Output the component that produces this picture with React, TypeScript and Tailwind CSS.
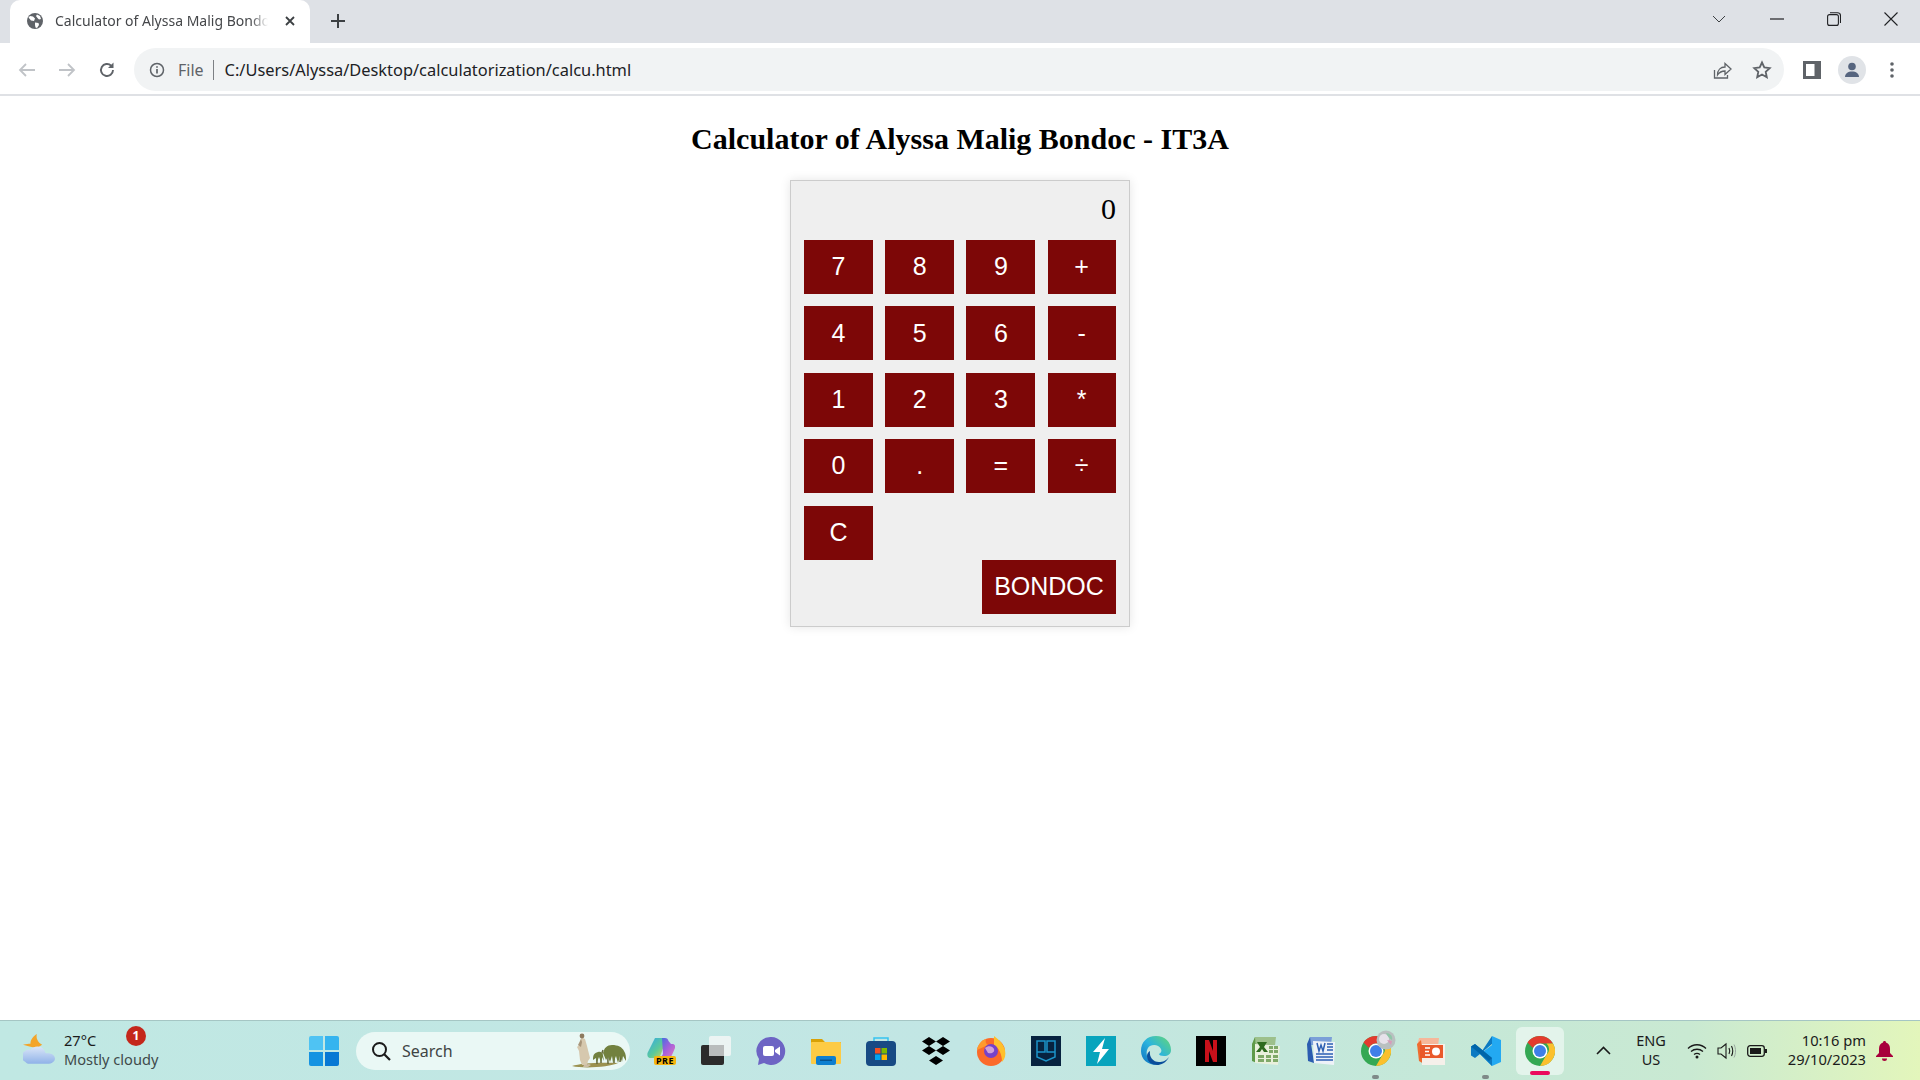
import React from "react";

const ui = { fontFamily: '"Noto Sans", "Open Sans", sans-serif' };

function Globe() {
  return (
    <svg width="18" height="18" viewBox="0 0 18 18">
      <circle cx="9" cy="9" r="8" fill="#5f6368" />
      <path d="M4 4l3 .5 2 2-1 2.500-3-.5-2.500-3zM11 2.500l3 1.500 1 3-2 .5-1.500-1.500-1.500-2zM9 10.500l3.500.5.5 2-2 3-1.500-.5-.5-2.500z" fill="#fff" />
    </svg>
  );
}

function Tabs() {
  return (
    <div className="flex h-[43px] items-end bg-[#dee1e6]">
      <div className="ml-[10px] flex h-[43px] w-[300px] items-center rounded-t-[10px] bg-white pb-[2px] pl-[16px] pr-[12px]">
        <Globe />
        <div className="ml-[11px] h-[20px] w-[213px] overflow-hidden whitespace-nowrap text-[14px] leading-[20px] text-[#45474a]" style={{ ...ui, maskImage: "linear-gradient(90deg,#000 92%,transparent)" }}>
          Calculator of Alyssa Malig Bondoc - IT3A
        </div>
        <svg className="ml-[16px]" width="12" height="12" viewBox="0 0 12 12"><path d="M2 2l8 8M10 2l-8 8" stroke="#3c4043" strokeWidth="1.800" /></svg>
      </div>
      <div className="flex h-[43px] w-[44px] items-center justify-center pb-[2px] pl-[11px]">
        <svg width="16" height="16" viewBox="0 0 16 16"><path d="M8 1v14M1 8h14" stroke="#3c4043" strokeWidth="2" /></svg>
      </div>
      <div className="flex-1" />
      <div className="flex h-[37px] items-center self-start">
        <svg width="14" height="8" viewBox="0 0 14 8"><path d="M1 1l6 6 6-6" fill="none" stroke="#3c4043" strokeWidth="1" /></svg>
        <svg className="ml-[44px]" width="14" height="2" viewBox="0 0 14 2"><path d="M0 1h14" stroke="#202124" strokeWidth="1.200" /></svg>
        <svg className="ml-[43px]" width="14" height="14" viewBox="0 0 14 14"><rect x=".6" y="2.600" width="10.800" height="10.800" rx="2" fill="none" stroke="#202124" strokeWidth="1.100" /><path d="M3 .7h7.500a3 3 0 0 1 3 3V11" fill="none" stroke="#202124" strokeWidth="1.100" /></svg>
        <svg className="ml-[43px] mr-[22px]" width="14" height="14" viewBox="0 0 14 14"><path d="M.5.5l13 13M13.500.5l-13 13" stroke="#202124" strokeWidth="1.100" /></svg>
      </div>
    </div>
  );
}

function Toolbar() {
  return (
    <div className="flex h-[53px] items-center border-b-2 border-[#dfe1e5] bg-white pt-[2px]">
      <svg className="ml-[18px]" width="18" height="16" viewBox="0 0 18 16"><path d="M17 8H2M8 2L2 8l6 6" fill="none" stroke="#c0c3c7" strokeWidth="1.800" /></svg>
      <svg className="ml-[22px]" width="18" height="16" viewBox="0 0 18 16"><path d="M1 8h15M10 2l6 6-6 6" fill="none" stroke="#c0c3c7" strokeWidth="1.800" /></svg>
      <svg className="ml-[22px]" width="18" height="18" viewBox="0 0 18 18"><path d="M15 9a6 6 0 1 1-1.800-4.300" fill="none" stroke="#5f6368" strokeWidth="1.900" /><path d="M15.500 1.500v5.500h-5.500z" fill="#5f6368" /></svg>
      <div className="ml-[18px] flex h-[43px] w-[1650px] items-center rounded-full bg-[#f1f3f4] pl-[15px]">
        <svg width="16" height="16" viewBox="0 0 16 16"><circle cx="8" cy="8" r="6.500" fill="none" stroke="#5f6368" strokeWidth="1.500" /><path d="M8 7v4.500M8 4.200v1.600" stroke="#5f6368" strokeWidth="1.700" /></svg>
        <span className="ml-[13px] text-[16px] leading-[22px] text-[#5f6368]" style={ui}>File</span>
        <div className="ml-[9px] h-[20px] w-px bg-[#7d8084]" />
        <span className="ml-[11px] text-[16.400px] leading-[22px] text-[#202124]" style={ui}>C:/Users/Alyssa/Desktop/calculatorization/calcu.html</span>
        <div className="flex-1" />
        <svg width="20" height="20" viewBox="0 0 20 20"><path d="M2.500 10v8h13v-3" fill="none" stroke="#5f6368" strokeWidth="1.300" /><path d="M5.500 15c0-5 3-8 7.500-8V3.500l6 5.500-6 5.500V11c-3 0-5.500 1-7.500 4z" fill="none" stroke="#5f6368" strokeWidth="1.300" /></svg>
        <svg className="ml-[20px] mr-[12px]" width="20" height="20" viewBox="0 0 20 20"><path d="M10 2.500l2.300 5 5.400.6-4 3.700 1.100 5.400L10 14.500l-4.800 2.700 1.100-5.400-4-3.700 5.400-.6z" fill="none" stroke="#5f6368" strokeWidth="1.800" /></svg>
      </div>
      <svg className="ml-[19px]" width="18" height="18" viewBox="0 0 18 18"><rect width="18" height="18" fill="#5f6368" /><rect x="3" y="3" width="8.500" height="12" fill="#fff" /></svg>
      <div className="ml-[17px] flex h-[28px] w-[28px] items-center justify-center rounded-full bg-[#e0e3e7]">
        <svg width="18" height="18" viewBox="0 0 18 18"><circle cx="9" cy="5.500" r="3.800" fill="#56657f" /><path d="M2 16c0-3.500 3-5.500 7-5.500s7 2 7 5.500z" fill="#56657f" /></svg>
      </div>
      <svg className="ml-[24px]" width="4" height="16" viewBox="0 0 4 16"><circle cx="2" cy="2" r="1.800" fill="#5f6368" /><circle cx="2" cy="8" r="1.800" fill="#5f6368" /><circle cx="2" cy="14" r="1.800" fill="#5f6368" /></svg>
    </div>
  );
}

function Key({ label, wide }: { label: string; wide?: boolean }) {
  return (
    <button className={`flex h-[54px] items-center justify-center bg-[#7d0707] text-[25px] text-white ${wide ? "w-[134px] self-end" : ""}`} style={{ fontFamily: '"Liberation Sans", Arial, sans-serif' }}>
      {label}
    </button>
  );
}

function Calculator() {
  const keys = ["7", "8", "9", "+", "4", "5", "6", "-", "1", "2", "3", "*", "0", ".", "=", "÷", "C"];
  return (
    <div className="mx-auto mt-[25px] flex w-[340px] flex-col border border-[#cccccc] bg-[#efefef] px-[13px] pb-[12px] pt-[10px] shadow-[0_0_10px_rgba(0,0,0,0.1)]">
      <div className="mb-[13px] h-[36px] text-right text-[30px] leading-[36px] text-black" style={{ fontFamily: '"Liberation Serif", serif' }}>0</div>
      <div className="grid grid-cols-[69px_69px_69px_68px] gap-x-[12.200px] gap-y-[12.400px]">
        {keys.map((k) => <Key key={k} label={k} />)}
      </div>
      <div className="flex justify-end"><Key label="BONDOC" wide /></div>
    </div>
  );
}

function Weather() {
  return (
    <svg width="33" height="31" viewBox="0 0 31 29">
      <defs><linearGradient id="wc" x1="0" y1="0" x2="0" y2="1"><stop offset="0" stopColor="#dbe6f8" /><stop offset="1" stopColor="#8fb2e8" /></linearGradient></defs>
      <path d="M13 0c-1 4 1 8 5 10l-5 3-6-1-7-2c3-1 5-1 7-1 0-4 3-7 6-9z" fill="#f3a52a" />
      <path d="M2 26a5.500 5.500 0 0 1 0-10c1-1 3-2 5-1 2-4 10-5 13 0 1 3 1 3 3 3 4 0 7 2 7 5s-3 5-7 5H6c-2 0-3-1-4-2z" fill="url(#wc)" />
    </svg>
  );
}

function WinLogo() {
  return (
    <div className="grid h-[30px] w-[30px] grid-cols-2 gap-[2px]">
      <div className="rounded-tl-[2px] bg-[#4fc3f3]" />
      <div className="rounded-tr-[2px] bg-[#35b4ef]" />
      <div className="rounded-bl-[2px] bg-[#1593e2]" />
      <div className="rounded-br-[2px] bg-[#0778d4]" />
    </div>
  );
}

function SearchArt() {
  return (
    <svg width="58" height="36" viewBox="0 0 58 36">
      <path d="M2 33c8-3 28-4 46-3-8 4-34 6-46 3z" fill="#9b9150" />
      <path d="M11 4l4 2 2 7 3 12-2 3-1 4h-5l-2-5-1-9-2-4 3-3z" fill="#d6c8ae" />
      <path d="M11 6l-3 6 3 2 1-5z" fill="#a8957a" />
      <circle cx="12" cy="3" r="2.400" fill="#8d7a5f" />
      <path d="M14 32l5-1 2 1-3 2h-5z" fill="#cbbda5" />
      <g fill="none" strokeWidth="1.500">
        <path d="M27 31c0-4-1-8 2-11M31 30c0-4 0-9 2-13M38 31c0-6-1-11 2-16M44 30c0-6 1-11-1-16M50 29c0-5 1-9 2-12" stroke="#64683b" />
      </g>
      <path d="M23 27c0-5 1-7 5-8 3-1 4 1 5 3l1 6-2-4-1 5-2-5-2 5-1-4zM33 20c1-5 4-8 9-8 6 0 10 2 12 6 2 3 2 6 2 10l-3-5-1 6-2-6-2 7-2-7-3 7-1-7-2 6-2-5-2 3z" fill="#72813f" />
    </svg>
  );
}

const Chrome = ({ size = 30 }: { size?: number }) => (
  <svg width={size} height={size} viewBox="0 0 30 30">
    <circle cx="15" cy="15" r="15" fill="#34a853" />
    <path d="M15 0a15 15 0 0 1 13 7.500H15a7.500 7.500 0 0 0-7 4.500L2.500 6.500A15 15 0 0 1 15 0z" fill="#e33b2e" />
    <path d="M28 7.500A15 15 0 0 1 15 30l6.500-11.200a7.500 7.500 0 0 0 0-11.300z" fill="#fbc02d" />
    <circle cx="15" cy="15" r="7.500" fill="#fff" />
    <circle cx="15" cy="15" r="6" fill="#3f7fe8" />
  </svg>
);

const taskIcons: React.ReactNode[] = [
  <div key="cp" className="relative h-[28px] w-[29px]">
    <svg width="28" height="21" viewBox="0 0 28 21">
      <defs>
        <linearGradient id="cpg" x1="0" y1="0" x2="1" y2="1"><stop offset="0" stopColor="#2fa8ea" /><stop offset=".55" stopColor="#5cc99a" /><stop offset="1" stopColor="#e6d14a" /></linearGradient>
        <linearGradient id="cph" x1="0" y1="0" x2="1" y2="1"><stop offset="0" stopColor="#3a6fe0" /><stop offset=".5" stopColor="#a35fdc" /><stop offset="1" stopColor="#e47ac0" /></linearGradient>
      </defs>
      <path d="M8 1h8l3 2-5 14c-1 3-3 4-5 4H4c-3 0-4-2-3.500-5z" fill="url(#cpg)" />
      <path d="M15 1h3c2 0 3 1 3.500 3L24 7h1c3 0 3.500 2 3 4l-3 7c-1 2-2 3-5 3h-7c1-1 2-2 3-4z" fill="url(#cph)" />
    </svg>
    <div className="absolute bottom-0 right-0 h-[9px] rounded-[2px] bg-[#f5b50f] px-[2px] text-[9px] font-bold leading-[9px] tracking-[0.5px] text-black" style={ui}>PRE</div>
  </div>,
  <svg key="tv" width="30" height="30" viewBox="0 0 30 30">
    <rect x="0" y="9" width="23" height="20" rx="2" fill="#2b2b2b" />
    <rect x="8" y="0" width="22" height="20" rx="2" fill="#f3f6f6" opacity=".85" />
    <rect x="8" y="9" width="15" height="11" fill="#b9bcbc" />
  </svg>,
  <svg key="meet" width="30" height="30" viewBox="0 0 30 30">
    <path d="M15 1a14 14 0 1 1-7 26l-6 2 1-6A14 14 0 0 1 15 1z" fill="#6d64c4" />
    <rect x="7" y="10" width="11" height="10" rx="2" fill="#fff" />
    <path d="M19 14l5-3.500v9L19 16z" fill="#fff" />
  </svg>,
  <svg key="fold" width="30" height="30" viewBox="0 0 30 30">
    <path d="M0 3h11l3 3h16v4H0z" fill="#d9a106" />
    <rect x="0" y="6" width="30" height="22" rx="1" fill="#fdcb45" />
    <rect x="5" y="20" width="20" height="9" rx="2" fill="#0e7fd0" />
    <rect x="9" y="23.500" width="12" height="1.500" fill="#07538f" />
  </svg>,
  <svg key="store" width="30" height="30" viewBox="0 0 30 30">
    <path d="M8 6V2h14v4" fill="none" stroke="#36c3f0" strokeWidth="1.500" />
    <rect x="0" y="5" width="30" height="25" rx="4" fill="#174a84" />
    <rect x="9" y="12" width="5.500" height="5.500" fill="#f25022" />
    <rect x="15.500" y="12" width="5.500" height="5.500" fill="#7fba00" />
    <rect x="9" y="18.500" width="5.500" height="5.500" fill="#00a4ef" />
    <rect x="15.500" y="18.500" width="5.500" height="5.500" fill="#ffb900" />
  </svg>,
  <svg key="db" width="30" height="28" viewBox="0 0 30 28">
    <path d="M8 0l7 4.500L8 9 1 4.500zM22 0l7 4.500L22 9l-7-4.500zM8 9l7 4.500L8 18l-7-4.500zM22 9l7 4.500L22 18l-7-4.500zM15 19l7 4.500L15 28l-7-4.500z" fill="#000" />
  </svg>,
  <svg key="ff" width="30" height="30" viewBox="0 0 30 30">
    <circle cx="15" cy="16" r="14" fill="#fb6a2a" />
    <path d="M18 0c4 3 9 7 11 14 1 5 0 9-3 12 0-8-3-14-8-17z" fill="#ffc02b" />
    <path d="M1 14C2 8 6 4 10 3c-1 3 0 5 2 6z" fill="#ff9a2e" />
    <circle cx="15" cy="15" r="7" fill="#7542c9" />
    <path d="M9 12c3-3 8-2 9 1s-2 5-6 4z" fill="#f6c9e0" opacity=".7" />
  </svg>,
  <div key="dk" className="flex h-[30px] w-[30px] items-center justify-center bg-[#072340]">
    <svg width="20" height="24" viewBox="0 0 20 24"><path d="M1 2h8v11H1zM11 2h8v11h-8zM1 13v5l9 4 9-4v-5" fill="none" stroke="#1c94c9" strokeWidth="1.500" /></svg>
  </div>,
  <div key="tl" className="flex h-[30px] w-[30px] items-center justify-center bg-[#08a4bd]">
    <svg width="18" height="26" viewBox="0 0 18 26"><path d="M13 0L1 14h7l-3 12 12-15h-7z" fill="#fff" /></svg>
  </div>,
  <svg key="edge" width="30" height="30" viewBox="0 0 30 30">
    <defs><linearGradient id="eg" x1="0" y1="1" x2="1" y2="0"><stop offset="0" stopColor="#0b6fc0" /><stop offset=".5" stopColor="#2bb4de" /><stop offset="1" stopColor="#66d873" /></linearGradient></defs>
    <path d="M15 0c9 0 15 6 15 14 0 4-3 6-7 6-3 0-5-1-5-2 2-1 3-3 2-5-2-4-7-5-11-3-3 2-4 6-3 10 1 5 6 9 12 9C8 30 0 24 0 15 0 6 6 0 15 0z" fill="url(#eg)" />
    <path d="M9 15c-1 6 3 11 9 11 4 0 7-1 10-5-3 6-8 8-12 8-6 0-10-4-10-9 0-2 1-4 3-5z" fill="#0a4e9b" />
  </svg>,
  <div key="nf" className="flex h-[30px] w-[30px] items-center justify-center bg-black">
    <svg width="12" height="22" viewBox="0 0 12 22"><path d="M0 0h4v22l-4 .5zM8 0h4v22l-4-.5zM4 0l8 22H8L0 0z" fill="#c8101a" /></svg>
  </div>,
  <svg key="xl" width="30" height="30" viewBox="0 0 30 30">
    <path d="M4 1h21l-1 8H1z" fill="#9dc08b" />
    <path d="M1 8l3-7 2 26-5-2z" fill="#5f9a48" />
    <path d="M4 8l25 2-2 19-23-2z" fill="#e9f0dc" />
    <path d="M6 6h10l-3 5 4 5h-4l-2-3-2 3H5l4-5z" fill="#2f6b1e" />
    <path d="M18 10h4v3h-4zM23 10h4v3h-4zM18 14h4v3h-4zM23 14h4v3h-4zM7 19h6v3H7zM15 19h5v3h-5zM22 19h5v3h-5zM7 23h6v3H7zM15 23h5v3h-5zM22 23h5v3h-5z" fill="#7fa968" />
  </svg>,
  <svg key="wd" width="30" height="30" viewBox="0 0 30 30">
    <path d="M4 1h22l-1 8H2z" fill="#7b9fd8" />
    <path d="M1 8l3-7 4 26-6-2z" fill="#2b5cb0" />
    <path d="M7 5l22 1-1 23-20-2z" fill="#eef2f8" />
    <path d="M11 7l2 8 2-6 2 6 2-8" fill="none" stroke="#2d5fb2" strokeWidth="1.500" />
    <path d="M21 8h6M21 11h6M21 14h6M10 18h17M10 21h17M10 24h17" stroke="#2d5fb2" strokeWidth="1.500" />
  </svg>,
  <div key="ch1" className="relative h-[30px] w-[30px]">
    <Chrome />
    <svg className="absolute right-[-5px] top-[-6px]" width="20" height="20" viewBox="0 0 20 20"><circle cx="10" cy="10" r="9.500" fill="#b9c0c0" /><circle cx="8" cy="9" r="5" fill="#e6e2ea" /><path d="M10 3c4 0 7 3 6 7-2-1-4-3-6-7z" fill="#8fc6a8" /><path d="M11 10l5 1-1 4z" fill="#d89ab8" /></svg>
  </div>,
  <svg key="pp" width="30" height="30" viewBox="0 0 30 30">
    <path d="M3 2h20l-1 8H1z" fill="#f6b79a" />
    <path d="M1 8l4-4 3 24-5-3z" fill="#ee6c2f" />
    <rect x="6" y="8" width="23" height="21" fill="#f5f0ea" />
    <rect x="4" y="9" width="23" height="13" fill="#e9592b" />
    <path d="M9 12h5M9 15.500h4M9 19h5" stroke="#fff" strokeWidth="1.600" />
    <circle cx="20" cy="15.500" r="4" fill="#fff" />
  </svg>,
  <svg key="vs" width="30" height="30" viewBox="0 0 30 30">
    <path d="M21 0l9 4v22l-9 4-12-12 12-9z" fill="#23a9f2" />
    <path d="M21 0v30L9 18l-5 4-4-2.500V10.500L4 8l17 14V8L9 18" fill="#0c7ac2" />
    <path d="M0 10.500L4 8l17 14-3 3z" fill="#0065a9" />
  </svg>,
  <div key="ch2" className="relative flex h-[48px] w-[48px] items-center justify-center rounded-[6px] bg-[#e3f4eb]">
    <Chrome />
    <div className="absolute bottom-0 h-[4px] w-[20px] rounded-full bg-[#ea0a5c]" />
  </div>,
];

function Taskbar() {
  return (
    <div className="flex h-[60px] items-center border-t border-[#a5c6c4] bg-[linear-gradient(90deg,#c0e8e3_0%,#c2e6e4_50%,#c5e8d8_75%,#c9e9d2_88%,#e3f6bb_100%)]" style={ui}>
      <div className="relative ml-[23px] flex w-[286px] items-center">
        <div className="mb-[2px]"><Weather /></div>
        <div className="mb-[2px] ml-[8px] flex flex-col text-[14.600px] leading-[19px]">
          <span className="text-[#1b1b1b]">27°C</span>
          <span className="text-[#3f4a4a]">Mostly cloudy</span>
        </div>
        <div className="absolute left-[103px] top-[-5px] flex h-[20px] w-[20px] items-center justify-center rounded-full bg-[#c4271b] text-[12px] font-bold text-white">1</div>
      </div>
      <WinLogo />
      <div className="ml-[17px] flex h-[38px] w-[274px] items-center rounded-full bg-[#eaf8f5] pl-[15px] pr-[2px]">
        <svg width="20" height="20" viewBox="0 0 20 20"><circle cx="8.500" cy="8.500" r="6.500" fill="none" stroke="#1a1a1a" strokeWidth="2" /><path d="M13 13l6 6" stroke="#1a1a1a" strokeWidth="2.200" /></svg>
        <span className="ml-[11px] text-[16px] text-[#3f4444]">Search</span>
        <div className="flex-1" />
        <SearchArt />
      </div>
      <div className="ml-[4px] flex">
        {taskIcons.map((icon, i) => (
          <div key={i} className="relative flex h-[58px] w-[54.940px] items-center justify-center">
            {icon}
            {(i === 13 || i === 15) && <div className="absolute bottom-[1px] h-[4px] w-[7px] rounded-full bg-[#7f8a88]" />}
          </div>
        ))}
      </div>
      <svg className="ml-[28px]" width="15" height="9" viewBox="0 0 15 9"><path d="M1 8l6.500-6.500L14 8" fill="none" stroke="#1a1a1a" strokeWidth="1.600" /></svg>
      <div className="mb-[2px] ml-[26px] flex w-[28px] flex-col items-center text-[14.500px] leading-[19px] text-[#1b1b1b]">
        <span>ENG</span>
        <span>US</span>
      </div>
      <svg className="ml-[22px]" width="20" height="16" viewBox="0 0 20 16"><path d="M1 5.500c5-5 13-5 18 0M4 8.500c3.500-3 8.500-3 12 0M7 11.500c2-1.500 4-1.500 6 0" fill="none" stroke="#1a1a1a" strokeWidth="1.300" /><circle cx="10" cy="14" r="1.500" fill="#1a1a1a" /></svg>
      <svg className="ml-[10px]" width="20" height="18" viewBox="0 0 20 18"><path d="M1 6h3l5-4v14l-5-4H1z" fill="none" stroke="#1a1a1a" strokeWidth="1.100" /><path d="M12 6c1 2 1 4 0 6M14.500 4c1.500 3 1.500 7 0 10" fill="none" stroke="#1a1a1a" strokeWidth="1.100" /><path d="M17 2.500c2 4 2 9 0 13" fill="none" stroke="#9aa8a0" strokeWidth="1" /></svg>
      <svg className="ml-[10px]" width="20" height="12" viewBox="0 0 20 12"><rect x=".7" y=".7" width="16.600" height="10.600" rx="2.500" fill="none" stroke="#1a1a1a" strokeWidth="1.300" /><rect x="3" y="3" width="11" height="6" fill="#1a1a1a" /><rect x="18" y="4" width="2" height="4" fill="#1a1a1a" /></svg>
      <div className="mb-[2px] ml-[11px] flex w-[88px] flex-col items-end text-[14.700px] leading-[19px] text-[#1b1b1b]">
        <span>10:16 pm</span>
        <span>29/10/2023</span>
      </div>
      <svg className="ml-[10px]" width="17" height="20" viewBox="0 0 17 20"><path d="M8.500 0c1 0 1.500.7 1.500 1.500C13 2.300 14 5 14 8v4l3 3v1H0v-1l3-3V8c0-3 1-5.700 4-6.500C7 .7 7.500 0 8.500 0z" fill="#a8003c" /><path d="M6 17.500h5a2.500 2.500 0 0 1-5 0z" fill="#a8003c" /></svg>
    </div>
  );
}

export default function App() {
  return (
    <div className="flex h-[1080px] w-[1920px] flex-col overflow-hidden bg-white">
      <Tabs />
      <Toolbar />
      <main className="flex-1 pt-[26px]">
        <h1 className="text-center text-[30px] font-bold leading-[33px] text-black" style={{ fontFamily: '"Liberation Serif", serif' }}>
          Calculator of Alyssa Malig Bondoc - IT3A
        </h1>
        <Calculator />
      </main>
      <Taskbar />
    </div>
  );
}
